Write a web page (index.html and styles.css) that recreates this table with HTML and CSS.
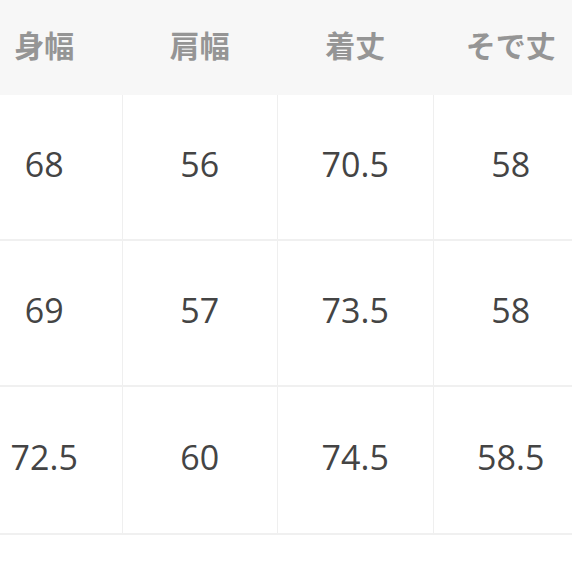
FILE: index.html
```html
<!DOCTYPE html>
<html lang="ja">
<head>
<meta charset="utf-8">
<link rel="stylesheet" href="styles.css">
</head>
<body>
<div class="page">
  <div class="table">
    <div class="cell head">身幅</div>
    <div class="cell head">肩幅</div>
    <div class="cell head">着丈</div>
    <div class="cell head">そで丈</div>

    <div class="cell">68</div>
    <div class="cell">56</div>
    <div class="cell">70.5</div>
    <div class="cell">58</div>

    <div class="cell">69</div>
    <div class="cell">57</div>
    <div class="cell">73.5</div>
    <div class="cell">58</div>

    <div class="cell">72.5</div>
    <div class="cell">60</div>
    <div class="cell">74.5</div>
    <div class="cell">58.5</div>
  </div>
</div>
</body>
</html>
```

FILE: styles.css
```css
html, body {
  margin: 0;
  padding: 0;
  background: #ffffff;
  overflow: hidden;
}
.page {
  width: 572px;
  height: 572px;
  overflow: hidden;
  position: relative;
}
.table {
  display: grid;
  grid-template-columns: repeat(4, 155.5px);
  grid-template-rows: 95px 146px 146px 148px;
  margin-left: -33px;
  width: 622px;
  font-family: "Open Sans", "Noto Sans CJK JP", sans-serif;
}
.cell {
  display: flex;
  align-items: center;
  justify-content: center;
  box-sizing: border-box;
  border-right: 1px solid #efefef;
  border-bottom: 2px solid #f0f0f0;
  font-size: 34px;
  color: #444444;
  padding-bottom: 6px;
}
.head {
  background: #f7f7f7;
  border-right: 1px solid #f7f7f7;
  border-bottom: none;
  color: #959595;
  font-weight: 700;
  font-size: 30px;
  padding-bottom: 8px;
  font-family: "Noto Sans CJK JP", sans-serif;
}
```
